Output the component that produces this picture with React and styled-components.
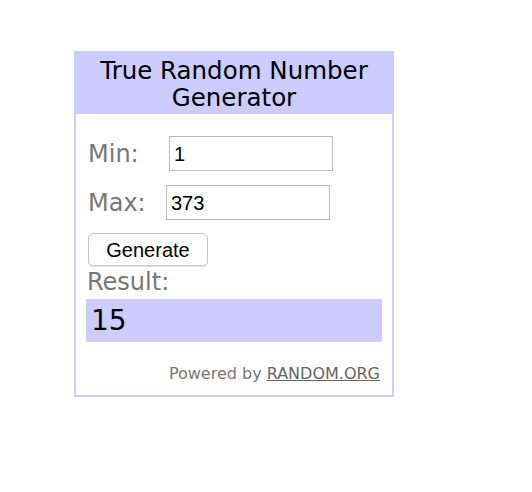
import React, { useState } from 'react'
import styled, { createGlobalStyle } from 'styled-components'

const Global = createGlobalStyle`
  body {
    margin: 0;
    background: #fff;
    font-family: "DejaVu Sans", Verdana, sans-serif;
  }
`

const Page = styled.div`
  padding: 51px 0 0 74px;
`

const Widget = styled.div`
  width: 320px;
  box-sizing: border-box;
  border: 2px solid #ccccff;
  background: #fff;
`

const Header = styled.div`
  background: #ccccff;
  color: #000;
  text-align: center;
  font-size: 24.5px;
  line-height: 27px;
  padding: 4px 0 3px;
`

const Body = styled.div`
  padding: 22px 10px 12px 10px;
`

const Row = styled.div`
  display: flex;
  align-items: center;
  margin-bottom: ${p => p.gap}px;
`

const Label = styled.span`
  display: inline-block;
  width: ${p => p.w}px;
  padding-left: 2px;
  color: #777;
  font-size: 24px;
`

const Field = styled.input`
  width: 164px;
  height: 35px;
  box-sizing: border-box;
  border: 1px solid #bbb;
  padding: 2px 4px 0;
  font-family: "Liberation Sans", Arial, sans-serif;
  font-size: 20px;
  color: #000;
  outline: none;
`

const Button = styled.button`
  margin-left: 2px;
  width: 120px;
  height: 33px;
  background: #fff;
  border: 1px solid #c8c8c8;
  border-radius: 5px;
  box-shadow: 0 1px 1px rgba(0, 0, 0, 0.15);
  font-family: "Liberation Sans", Arial, sans-serif;
  font-size: 20px;
  color: #000;
  padding: 2px 0 0;
`

const ResultLabel = styled.div`
  color: #777;
  font-size: 24px;
  line-height: 27px;
  padding-left: 1px;
  margin-top: 3px;
`

const ResultBox = styled.div`
  background: #ccccff;
  height: 43px;
  margin-top: 3px;
  padding-left: 5px;
  display: flex;
  align-items: center;
  font-size: 28px;
  color: #000;
`

const Footer = styled.div`
  text-align: right;
  margin-top: 22px;
  padding-right: 2px;
  font-size: 16px;
  color: #777;
  a {
    color: #666;
    text-decoration: underline;
  }
`

export default function App() {
  const [min, setMin] = useState('1')
  const [max, setMax] = useState('373')
  const [result, setResult] = useState(15)

  const generate = () => {
    const lo = parseInt(min, 10) || 0
    const hi = parseInt(max, 10) || 0
    setResult(Math.floor(Math.random() * (hi - lo + 1)) + lo)
  }

  return (
    <Page>
      <Global />
      <Widget>
        <Header>True Random Number<br />Generator</Header>
        <Body>
          <Row gap={14}>
            <Label w={81}>Min:</Label>
            <Field value={min} onChange={e => setMin(e.target.value)} />
          </Row>
          <Row gap={13}>
            <Label w={78}>Max:</Label>
            <Field value={max} onChange={e => setMax(e.target.value)} />
          </Row>
          <Button onClick={generate}>Generate</Button>
          <ResultLabel>Result:</ResultLabel>
          <ResultBox>{result}</ResultBox>
          <Footer>Powered by <a href="#">RANDOM.ORG</a></Footer>
        </Body>
      </Widget>
    </Page>
  )
}
